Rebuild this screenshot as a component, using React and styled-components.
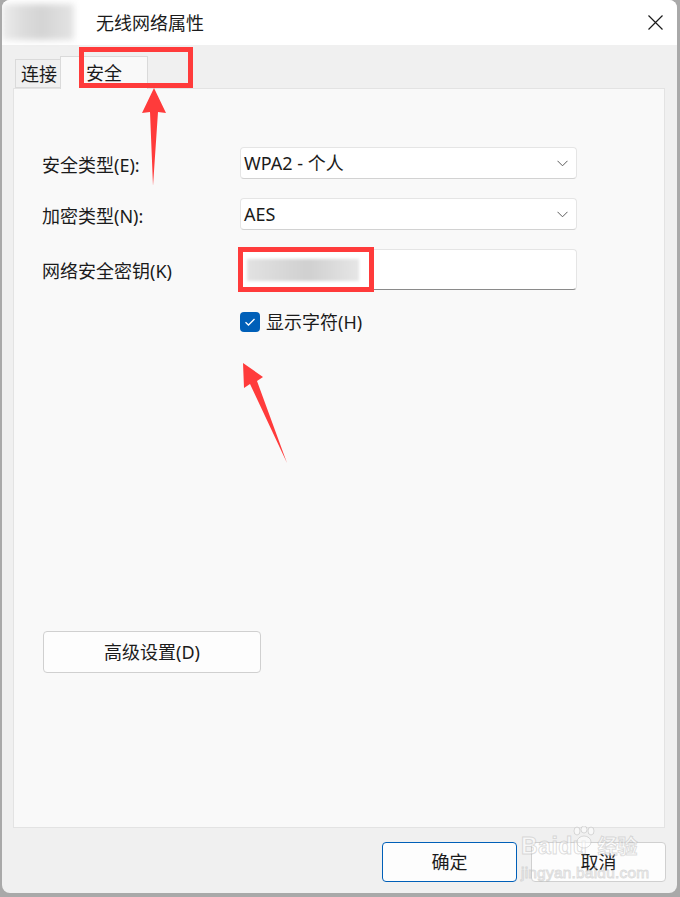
import React from 'react';
import styled, { createGlobalStyle } from 'styled-components';

const GlobalStyle = createGlobalStyle`
  html, body {
    margin: 0;
    padding: 0;
    background: #a9a9a9;
  }
  body {
    font-family: "Noto Sans", "Noto Sans CJK SC", sans-serif;
    color: #1b1b1b;
  }
`;

const Page = styled.div`
  width: 680px;
  height: 897px;
  overflow: hidden;
`;

const Window = styled.div`
  position: relative;
  margin: 0 3px 0 2px;
  height: 893px;
  background: #f0f0f0;
  border-radius: 8px;
  overflow: hidden;
  display: flex;
  flex-direction: column;
`;

const TitleBar = styled.div`
  height: 45px;
  flex-shrink: 0;
  background: #ffffff;
  display: flex;
  align-items: center;
`;

const BlurredIcon = styled.div`
  width: 72px;
  height: 36px;
  margin-top: -2px;
  background: linear-gradient(90deg, #ececec 0%, #dcdcdc 30%, #d4d4d4 55%, #e4e4e4 100%);
  filter: blur(3px);
`;

const Title = styled.span`
  margin-left: 22px;
  font-size: 18px;
  line-height: 1;
`;

const CloseButton = styled.div`
  margin-left: auto;
  margin-right: 14px;
  width: 15px;
  height: 15px;
  display: flex;
`;

const TabStrip = styled.div`
  height: 43px;
  flex-shrink: 0;
  display: flex;
  align-items: flex-end;
  padding-left: 13px;
`;

const Tab = styled.div`
  position: relative;
  z-index: ${(p) => (p.$active ? 1 : 0)};
  box-sizing: border-box;
  width: ${(p) => (p.$active ? '88px' : '46px')};
  height: ${(p) => (p.$active ? '33px' : '29px')};
  margin-left: ${(p) => (p.$active ? '-1px' : '0')};
  margin-bottom: ${(p) => (p.$active ? '-1px' : '0')};
  border: 1px solid #dadada;
  border-bottom: ${(p) => (p.$active ? 'none' : '1px solid #dadada')};
  background: ${(p) => (p.$active ? '#f9f9f9' : '#f0f0f0')};
  display: flex;
  align-items: center;
  justify-content: ${(p) => (p.$active ? 'center' : 'flex-start')};
  padding-left: ${(p) => (p.$active ? '0' : '5px')};
  font-size: 18px;
  line-height: 1;
`;

const Panel = styled.div`
  box-sizing: border-box;
  height: 740px;
  flex-shrink: 0;
  margin: 0 12px 0 11px;
  border: 1px solid #e3e3e3;
  background: #f9f9f9;
  padding: 58px 0 0 28px;
`;

const FormGrid = styled.div`
  display: grid;
  grid-template-columns: 198px 337px;
  row-gap: 19px;
  align-items: center;
`;

const Label = styled.span`
  font-size: 18px;
  line-height: 1;
  padding-top: 3px;
`;

const Select = styled.div`
  box-sizing: border-box;
  height: 32px;
  background: #ffffff;
  border: 1px solid #e5e5e5;
  border-bottom-color: #d2d2d2;
  border-radius: 4px;
  display: flex;
  align-items: center;
  padding: 0 8px 0 3px;
  font-size: 18px;
  line-height: 1;
`;

const SelectValue = styled.span`
  flex: 1;
`;

const TextBox = styled.div`
  box-sizing: border-box;
  height: 41px;
  background: #ffffff;
  border: 1px solid #e5e5e5;
  border-bottom: 1px solid #8a8a8a;
  border-radius: 4px;
  display: flex;
  align-items: center;
  padding-left: 6px;
`;

const BlurredKey = styled.div`
  width: 112px;
  height: 22px;
  background: linear-gradient(90deg, #e2e2e2 0%, #d8d8d8 30%, #d0d0d0 55%, #dcdcdc 80%, #e6e6e6 100%);
  filter: blur(1.5px);
`;

const CheckRow = styled.label`
  grid-column: 2;
  margin-top: 3px;
  display: flex;
  align-items: center;
  gap: 6px;
  font-size: 18px;
  line-height: 1;
`;

const CheckBox = styled.span`
  width: 20px;
  height: 20px;
  border-radius: 4px;
  background: #005fb8;
  display: flex;
  align-items: center;
  justify-content: center;
`;

const Button = styled.button`
  box-sizing: border-box;
  width: ${(p) => p.$w}px;
  height: ${(p) => p.$h}px;
  background: #fdfdfd;
  border: 1px solid ${(p) => (p.$primary ? '#005fb8' : '#d0d0d0')};
  border-radius: 4px;
  font-family: "Noto Sans", "Noto Sans CJK SC", sans-serif;
  font-size: 18px;
  line-height: 1;
  color: #1b1b1b;
  padding: 0;
`;

const AdvancedButton = styled(Button)`
  display: block;
  margin: 299px 0 0 1px;
`;

const Footer = styled.div`
  flex: 1;
  display: flex;
  justify-content: flex-end;
  align-items: flex-start;
  gap: 14px;
  padding: 14px 11px 0 0;
`;

const Annotations = styled.svg`
  position: absolute;
  left: -2px;
  top: 0;
  width: 680px;
  height: 897px;
  pointer-events: none;
  z-index: 5;
`;

const Watermark = styled.div`
  position: absolute;
  left: 519px;
  top: 826px;
  z-index: 6;
  pointer-events: none;
  font-family: "Liberation Sans", "Noto Sans CJK SC", sans-serif;
  color: rgba(255, 255, 255, 0.5);
  -webkit-text-stroke: 1px rgba(170, 170, 170, 0.4);
`;

const MarkTop = styled.div`
  position: relative;
  display: flex;
  align-items: flex-end;
  height: 34px;
`;

const MarkBrand = styled.span`
  font-size: 23px;
  font-weight: bold;
  letter-spacing: 0.5px;
`;

const MarkCn = styled.span`
  margin-left: 10px;
  font-size: 20px;
  font-weight: bold;
  font-family: "Noto Sans CJK SC", sans-serif;
`;

const Paw = styled.svg`
  position: absolute;
  left: 50px;
  top: 0;
`;

const MarkUrl = styled.div`
  margin-top: 4px;
  font-size: 15.5px;
  letter-spacing: 0.2px;
`;

const Chevron = () => (
  <svg width="11" height="7" viewBox="0 0 11 7">
    <path d="M0.5 0.8 L5.5 5.8 L10.5 0.8" fill="none" stroke="#5c5c5c" strokeWidth="1" />
  </svg>
);

const App = () => {
  return (
    <Page>
      <GlobalStyle />
      <Window>
        <TitleBar>
          <BlurredIcon />
          <Title>无线网络属性</Title>
          <CloseButton>
            <svg width="15" height="15" viewBox="0 0 15 15">
              <path d="M0.5 0.5 L14.5 14.5 M14.5 0.5 L0.5 14.5" stroke="#1b1b1b" strokeWidth="1.2" />
            </svg>
          </CloseButton>
        </TitleBar>

        <TabStrip>
          <Tab>连接</Tab>
          <Tab $active>安全</Tab>
        </TabStrip>

        <Panel>
          <FormGrid>
            <Label>安全类型(E):</Label>
            <Select>
              <SelectValue>WPA2 - 个人</SelectValue>
              <Chevron />
            </Select>

            <Label>加密类型(N):</Label>
            <Select>
              <SelectValue>AES</SelectValue>
              <Chevron />
            </Select>

            <Label>网络安全密钥(K)</Label>
            <TextBox>
              <BlurredKey />
            </TextBox>

            <CheckRow>
              <CheckBox>
                <svg width="12" height="10" viewBox="0 0 12 10">
                  <path d="M1.5 5.2 L4.5 8 L10.5 2" fill="none" stroke="#ffffff" strokeWidth="1.3" />
                </svg>
              </CheckBox>
              显示字符(H)
            </CheckRow>
          </FormGrid>

          <AdvancedButton $w={218} $h={42}>高级设置(D)</AdvancedButton>
        </Panel>

        <Footer>
          <Button $primary $w={135} $h={40}>确定</Button>
          <Button $w={135} $h={40}>取消</Button>
        </Footer>

        <Annotations viewBox="0 0 680 897">
          <rect x="81.5" y="49.5" width="109" height="36" fill="none" stroke="#ff3b3b" strokeWidth="5" />
          <rect x="240.5" y="249.5" width="131" height="40" fill="none" stroke="#ff3b3b" strokeWidth="5" />
          <polygon points="154,88 166,113 158,112 153,186 150,112 142,113" fill="#ff3b3b" />
          <polygon points="243,363 263,377 257,381 287,463 250,384 244,388" fill="#ff3b3b" />
        </Annotations>

        <Watermark>
          <MarkTop>
            <MarkBrand>Baidu</MarkBrand>
            <MarkCn>经验</MarkCn>
            <Paw width="26" height="24" viewBox="0 0 26 24">
              <g fill="rgba(255,255,255,0.5)" stroke="rgba(170,170,170,0.4)" strokeWidth="1">
                <ellipse cx="6" cy="5" rx="3" ry="4" />
                <ellipse cx="13" cy="3.5" rx="3" ry="3.5" />
                <ellipse cx="20" cy="5" rx="3" ry="4" />
                <ellipse cx="13" cy="16" rx="7" ry="6" />
              </g>
            </Paw>
          </MarkTop>
          <MarkUrl>jingyan.baidu.com</MarkUrl>
        </Watermark>
      </Window>
    </Page>
  );
};

export default App;
